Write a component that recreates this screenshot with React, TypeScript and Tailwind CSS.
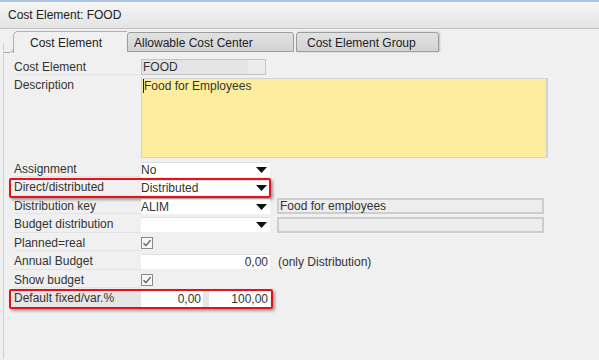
import React from 'react';

const font = { fontFamily: '"Liberation Sans", Arial, sans-serif' };

function Arrow() {
  return (
    <svg width="11" height="6" viewBox="0 0 11 6" className="shrink-0">
      <path d="M0 0H11L5.5 6Z" fill="#111" />
    </svg>
  );
}

function Check() {
  return (
    <div className="w-[12px] h-[12px] border border-[#8a8a8a] bg-[#f7f7f7] flex items-center justify-center">
      <svg width="10" height="10" viewBox="0 0 10 10">
        <path d="M1.5 5.2L4 7.6L8.6 2.2" fill="none" stroke="#555" strokeWidth="1.3" />
      </svg>
    </div>
  );
}

function Row({ label, children, boxed }: { label: string; children?: React.ReactNode; boxed?: boolean }) {
  return (
    <div className="relative flex items-center h-[18.5px]">
      <div
        className={
          'w-[127px] h-[16px] flex items-center border-b border-[#e3e3e3] ' +
          (boxed ? 'bg-[#e6e6e6] -ml-[2px] pl-[2px] w-[129px]' : '')
        }
      >
        {label}
      </div>
      {children}
    </div>
  );
}

function Dropdown({ value }: { value: string }) {
  return (
    <div className="w-[129px] h-[15px] bg-white border-t border-[#e0e0e0] flex items-center justify-between pr-[3px]">
      <span>{value}</span>
      <Arrow />
    </div>
  );
}

function Highlight({ width }: { width: string }) {
  return (
    <div
      className={
        'absolute -left-[5px] -top-[1px] -bottom-[1px] border-2 border-[#e4121b] rounded-[2px] shadow-[2px_2px_3px_rgba(0,0,0,0.35)] pointer-events-none ' +
        width
      }
    />
  );
}

export default function App() {
  return (
    <div className="w-[599px] h-[360px] bg-[#f0f0f0] overflow-hidden text-[12px] text-[#333]" style={font}>
      {/* title bar */}
      <div className="h-[2px] bg-[#a9c4e6]" />
      <div className="h-[27px] bg-gradient-to-b from-[#f7f7f7] to-[#e3e3e3] border-b border-[#c2c2c2] flex items-center pl-[8px] text-[#222]">
        Cost Element: FOOD
      </div>

      {/* tabs */}
      <div className="flex items-end h-[23px] mt-[1px]">
        <div className="w-[4px] h-[10px] border-r border-[#cfcfcf]" />
        <div className="w-[10px] h-[6px] border-b border-r border-[#a9a9a9] rounded-br-[5px]" />
        <div className="w-[114px] h-[22px] -ml-px bg-[#f0f0f0] border-t border-l border-[#b0b0b0] rounded-tl-[5px] flex items-center pl-[16px] pt-[1px] text-[#222]">
          Cost Element
        </div>
        <div className="w-[167px] h-[20px] mb-px bg-gradient-to-b from-[#e2e2e2] to-[#d3d3d3] border border-[#9c9c9c] rounded-t-[3px] flex items-center pl-[6px] pt-[1px] text-[#222]">
          Allowable Cost Center
        </div>
        <div className="w-[143px] h-[20px] mb-px ml-[2px] bg-gradient-to-b from-[#e2e2e2] to-[#d3d3d3] border border-[#9c9c9c] rounded-t-[3px] shadow-[1px_0_2px_rgba(0,0,0,0.2)] flex items-center pl-[10px] pt-[1px] text-[#222]">
          Cost Element Group
        </div>
      </div>

      {/* form */}
      <div className="h-[306px] ml-[3px] border-l border-[#cfcfcf] pl-[10px] pt-[5px]">
        <Row label="Cost Element">
          <div className="w-[125px] h-[16px] border border-[#c4c4c4] flex">
            <div className="w-[106px] h-full bg-[#e4e4e4] flex items-center pl-[1px]">FOOD</div>
            <div className="flex-1 bg-[#ececec]" />
          </div>
        </Row>

        <div className="flex h-[83.5px]">
          <div className="w-[127px] leading-[16px]">Description</div>
          <div className="w-[407px] h-[80px] mt-[1.5px] bg-[#fdee9e] border border-[#d2d2d2] border-r-2 pl-[1px] leading-[14px]">
            <span className="border-l border-[#222]">Food for Employees</span>
          </div>
        </div>

        <Row label="Assignment">
          <Dropdown value="No" />
        </Row>
        <Row label="Direct/distributed">
          <Dropdown value="Distributed" />
          <Highlight width="w-[262px]" />
        </Row>
        <Row label="Distribution key">
          <Dropdown value="ALIM" />
          <div className="ml-[7px] w-[267px] h-[16px] bg-[#ededed] border-2 border-[#cdcdcd] flex items-center pl-[1px]">
            Food for employees
          </div>
        </Row>
        <Row label="Budget distribution">
          <Dropdown value="" />
          <div className="ml-[7px] w-[267px] h-[16px] bg-[#ededed] border-2 border-[#cdcdcd]" />
        </Row>
        <Row label="Planned=real">
          <Check />
        </Row>
        <Row label="Annual Budget">
          <div className="w-[129px] h-[15px] bg-white border-t border-[#e0e0e0] flex items-center justify-end pr-[2px]">
            0,00
          </div>
          <span className="ml-[8px]">(only Distribution)</span>
        </Row>
        <Row label="Show budget">
          <Check />
        </Row>
        <Row label="Default fixed/var.%" boxed>
          <div className="w-[62px] h-[16px] bg-white flex items-center justify-end pr-[2px]">0,00</div>
          <div className="w-[6px] h-[16px] bg-[#e6e6e6]" />
          <div className="w-[61px] h-[16px] bg-white flex items-center justify-end pr-[2px]">100,00</div>
          <Highlight width="w-[264px]" />
        </Row>
      </div>
    </div>
  );
}
